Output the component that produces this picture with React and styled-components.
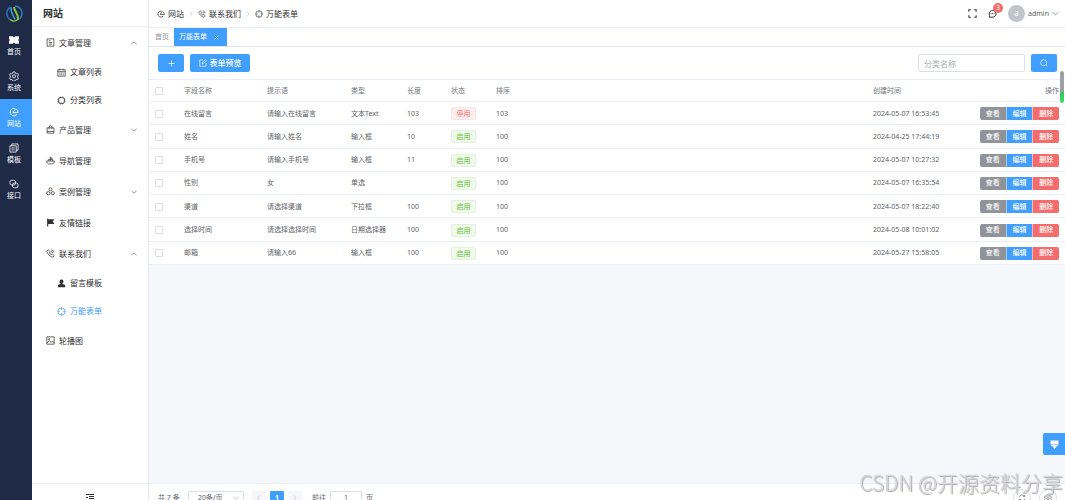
import React, { useState } from 'react';
import styled, { createGlobalStyle } from 'styled-components';

const icons = {
  ticket: <path d="M0 2h6l2 2 2-2h6v4.500l-1.500 1.500 1.500 1.500V14h-6l-2-2-2 2H0V9.500L1.500 8 0 6.500z" fill="currentColor" stroke="none" />,
  setting: (
    <>
      <path d="M6.500 1.500h3l.6 2 1.600.9 2-.5 1.500 2.600-1.400 1.500v1.900l1.400 1.500-1.500 2.600-2-.5-1.600.9-.6 2h-3l-.6-2-1.600-.9-2 .5L.8 11.400l1.400-1.500V8L.8 6.500l1.500-2.600 2 .5 1.600-.9z" />
      <circle cx="8" cy="8.500" r="2.500" />
    </>
  ),
  site: <path d="M12.500 12A6 6 0 1 1 9.500 2.500M6.500 9h8c0-2.500-1-5-3-5.500-1.500 0-3.500 2.500-5 5.500z" strokeWidth="1.500" />,
  copy: <path d="M4.500 4.500V1.500h10v10h-3M1.500 4.500h10v10h-10zM4 8h5M4 11h5" />,
  link: (
    <>
      <rect x="1.500" y="2" width="9" height="7.500" rx="3" />
      <rect x="5.500" y="6.500" width="9" height="7.500" rx="3" />
    </>
  ),
  doc: <path d="M2 1.500h12v13H2zM5 5h3M5 8h6M5 11h6" />,
  calendar: <path d="M1.500 3h13v11.500h-13zM1.500 6.500h13M5 1v3M11 1v3M4 9h2M7 9h2M10 9h2M4 12h2M7 12h2M10 12h2" />,
  chip: (
    <>
      <rect x="3" y="3" width="10" height="10" rx="2.500" strokeWidth="1.600" />
      <path d="M6 1v2M10 1v2M6 13v2M10 13v2M1 6h2M1 10h2M13 6h2M13 10h2" />
    </>
  ),
  bag: <path d="M2 5h12v9.500H2zM5.500 7.500V3.500a2.500 2.500 0 0 1 5 0v4M2 11.500h12" />,
  ship: <path d="M1 9h14c-.5 3-2 5-4 5H5c-2 0-3.500-2-4-5zM7.500 9V1.500M7.500 2l4 3h-4M4 9V6.500h8V9" />,
  share: (
    <>
      <circle cx="8" cy="4" r="2.700" />
      <circle cx="4" cy="11" r="2.900" />
      <circle cx="12" cy="11" r="2.900" />
    </>
  ),
  flag: <path d="M2 1h2v1h11l-3 4 3 4.500H4V15H2z" fill="currentColor" stroke="none" />,
  phone: (
    <>
      <path d="M1.500 4 4 1.500l3.500 3-1.500 2.500c.6 1.300 1.700 2.400 3 3l2.500-1.500 3 3.500-2.500 2.500C7.500 14 2 8.500 1.500 4z" />
      <path d="M9 4.500a3 3 0 0 1 2.500 2.500M9.500 1.500a6 6 0 0 1 5 5" />
    </>
  ),
  user: <path d="M8 1a3.600 3.600 0 0 1 2 6.600V9l4.500 1.500V14.500h-13V10.500L6 9V7.600A3.600 3.600 0 0 1 8 1z" fill="currentColor" stroke="none" />,
  aim: (
    <>
      <circle cx="8" cy="8" r="6.500" />
      <path d="M8 1.500v3.500M8 11v3.500M1.500 8H5M11 8h3.500" />
    </>
  ),
  picture: (
    <>
      <path d="M1.500 1.500h13v13h-13zM2 12.500l4-4 3 2.500 2.500-2 3 3" />
      <circle cx="5.500" cy="5.500" r="1" />
    </>
  ),
  up: <path d="m1 11 7-6 7 6" />,
  down: <path d="m1 5 7 6 7-6" />,
  left: <path d="m11 1-6 7 6 7" />,
  right: <path d="m5 1 6 7-6 7" />,
  close: <path d="m2 2 12 12M14 2 2 14" strokeWidth="1.800" />,
  plus: <path d="M8 1v14M1 8h14" strokeWidth="1.600" />,
  edit: <path d="M14 8v6.500H1.500V2H8M6 10l.5-2.500L13 1l2 2-6.500 6.500z" />,
  search: (
    <>
      <circle cx="7.500" cy="7.500" r="6" />
      <path d="m12 12 2.500 2.500" />
    </>
  ),
  full: <path d="M1.500 5V1.500H5M11 1.500h3.500V5M14.500 11v3.500H11M5 14.500H1.500V11" strokeWidth="1.800" />,
  message: (
    <>
      <path d="M2 14.500h6.500A6 6 0 1 0 3 11.500z" strokeWidth="1.700" />
      <path d="M4.500 8h1.500M7.300 8h1.500M10 8h1.500" strokeWidth="1.800" />
    </>
  ),
  brush: <path d="M1 1h14v7H1zM2 9h12v1.500l-4 1V14l-2 2-2-2v-2.500l-4-1z" fill="currentColor" stroke="none" />,
  fold: <path d="M0 1h16M6 5h10M6 9h10M0 13h16M0 7h4" strokeWidth="2" />,
  refresh: <path d="M2.500 7a5.700 5.700 0 0 1 10.500-2.500M13.500 1.500v3.500H10M13.500 9A5.700 5.700 0 0 1 3 11.500M2.500 14.500V11H6" />,
};

function Icon({ name, size = 9 }) {
  return (
    <Svg viewBox="0 0 16 16" $size={size} aria-hidden="true">
      {icons[name]}
    </Svg>
  );
}

const railItems = [
  { icon: 'ticket', label: '首页' },
  { icon: 'setting', label: '系统' },
  { icon: 'site', label: '网站' },
  { icon: 'copy', label: '模板' },
  { icon: 'link', label: '接口' },
];

const menuItems = [
  { icon: 'doc', label: '文章管理', arrow: 'up' },
  { icon: 'calendar', label: '文章列表', sub: true },
  { icon: 'chip', label: '分类列表', sub: true },
  { icon: 'bag', label: '产品管理', arrow: 'down' },
  { icon: 'ship', label: '导航管理' },
  { icon: 'share', label: '案例管理', arrow: 'down' },
  { icon: 'flag', label: '友情链接' },
  { icon: 'phone', label: '联系我们', arrow: 'up' },
  { icon: 'user', label: '留言模板', sub: true },
  { icon: 'aim', label: '万能表单', sub: true, active: true },
  { icon: 'picture', label: '轮播图' },
];

const crumbs = [
  { icon: 'site', label: '网站' },
  { icon: 'phone', label: '联系我们' },
  { icon: 'aim', label: '万能表单' },
];

const rows = [
  { name: '在线留言', hint: '请输入在线留言', type: '文本Text', length: '103', enabled: false, sort: '103', time: '2024-05-07 16:53:45' },
  { name: '姓名', hint: '请输入姓名', type: '输入框', length: '10', enabled: true, sort: '100', time: '2024-04-25 17:44:19' },
  { name: '手机号', hint: '请输入手机号', type: '输入框', length: '11', enabled: true, sort: '100', time: '2024-05-07 10:27:32' },
  { name: '性别', hint: '女', type: '单选', length: '', enabled: true, sort: '100', time: '2024-05-07 16:35:54' },
  { name: '渠道', hint: '请选择渠道', type: '下拉框', length: '100', enabled: true, sort: '100', time: '2024-05-07 18:22:40' },
  { name: '选择时间', hint: '请选择选择时间', type: '日期选择器', length: '100', enabled: true, sort: '100', time: '2024-05-08 10:01:02' },
  { name: '邮箱', hint: '请输入66', type: '输入框', length: '100', enabled: true, sort: '100', time: '2024-05-27 15:58:05' },
];

function App() {
  const [keyword, setKeyword] = useState('');
  const [page, setPage] = useState('1');
  const [checked, setChecked] = useState([]);

  const toggle = (name) => {
    setChecked(checked.includes(name) ? checked.filter((n) => n !== name) : [...checked, name]);
  };

  const toggleAll = () => {
    setChecked(checked.length === rows.length ? [] : rows.map((r) => r.name));
  };

  return (
    <Layout>
      <GlobalStyle />
      <Rail>
        <LogoBox>
          <svg width="17" height="17" viewBox="0 0 34 34" fill="none" aria-label="logo">
            <path d="M9 4A15 15 0 0 0 8 29" stroke="#2a6fb8" strokeWidth="3" />
            <path d="M18 2a15 15 0 0 1 9 26" stroke="#2f7fb0" strokeWidth="3" />
            <path d="M10 5c-1 9 3 13 8 24" stroke="#3a9ad0" strokeWidth="3" />
            <path d="M16 4c1 10 9 12 8 25" stroke="#8cc63f" strokeWidth="4" />
            <path d="M8 29c5 4 12 4 17-1" stroke="#8cc63f" strokeWidth="3" />
          </svg>
        </LogoBox>
        {railItems.map((item) => (
          <RailItem href="#" key={item.label} $active={item.label === '网站'}>
            <Icon name={item.icon} size={10} />
            {item.label}
          </RailItem>
        ))}
      </Rail>

      <Sidebar>
        <SideTitle>网站</SideTitle>
        <Menu>
          {menuItems.map((item) => (
            <MenuItem href="#" key={item.label} $sub={item.sub} $active={item.active}>
              <Icon name={item.icon} />
              <MenuText>{item.label}</MenuText>
              {item.arrow && <Icon name={item.arrow} size={6} />}
            </MenuItem>
          ))}
        </Menu>
        <FoldButton aria-label="收起菜单">
          <Icon name="fold" size={8} />
        </FoldButton>
      </Sidebar>

      <Main>
        <Header>
          <Breadcrumb>
            {crumbs.map((item, i) => (
              <React.Fragment key={item.label}>
                {i > 0 && <Separator><Icon name="right" size={6} /></Separator>}
                <Crumb href="#"><Icon name={item.icon} size={8} />{item.label}</Crumb>
              </React.Fragment>
            ))}
          </Breadcrumb>
          <HeaderRight>
            <PlainButton aria-label="全屏"><Icon name="full" size={9} /></PlainButton>
            <MessageButton aria-label="消息">
              <Icon name="message" size={9} />
              <Badge>3</Badge>
            </MessageButton>
            <UserButton>
              <Avatar>a</Avatar>
              admin
              <Icon name="down" size={7} />
            </UserButton>
          </HeaderRight>
        </Header>

        <Tabs>
          <Tab href="#">首页</Tab>
          <Tab href="#" $active>万能表单<Icon name="close" size={5} /></Tab>
        </Tabs>

        <Toolbar>
          <PrimaryButton $width="26px" aria-label="新增"><Icon name="plus" size={7} /></PrimaryButton>
          <PrimaryButton $width="60px"><Icon name="edit" size={8} />表单预览</PrimaryButton>
          <SearchInput
            aria-label="分类名称"
            placeholder="分类名称"
            value={keyword}
            onChange={(e) => setKeyword(e.target.value)}
          />
          <PrimaryButton $width="26px" aria-label="搜索"><Icon name="search" size={8} /></PrimaryButton>
        </Toolbar>

        <Content>
          <Table>
            <colgroup>
              <Col $width="29px" />
              <Col $width="83px" />
              <Col $width="84px" />
              <Col $width="56px" />
              <Col $width="44px" />
              <Col $width="45px" />
              <Col />
              <Col $width="107px" />
              <Col $width="91px" />
            </colgroup>
            <thead>
              <tr>
                <Th>
                  <Checkbox aria-label="全选" checked={checked.length === rows.length} onChange={toggleAll} />
                </Th>
                <Th>字段名称</Th>
                <Th>提示语</Th>
                <Th>类型</Th>
                <Th>长度</Th>
                <Th>状态</Th>
                <Th>排序</Th>
                <Th>创建时间</Th>
                <Th $right>操作</Th>
              </tr>
            </thead>
            <tbody>
              {rows.map((row) => (
                <tr key={row.name}>
                  <Td>
                    <Checkbox aria-label={row.name} checked={checked.includes(row.name)} onChange={() => toggle(row.name)} />
                  </Td>
                  <Td>{row.name}</Td>
                  <Td>{row.hint}</Td>
                  <Td>{row.type}</Td>
                  <Td>{row.length}</Td>
                  <Td><Tag $enabled={row.enabled}>{row.enabled ? '启用' : '停用'}</Tag></Td>
                  <Td>{row.sort}</Td>
                  <Td>{row.time}</Td>
                  <Td>
                    <ButtonGroup>
                      <RowButton $color="#909399">查看</RowButton>
                      <RowButton $color="#409eff">编辑</RowButton>
                      <RowButton $color="#f56c6c">删除</RowButton>
                    </ButtonGroup>
                  </Td>
                </tr>
              ))}
            </tbody>
          </Table>
        </Content>

        <Footer>
          <Total>共 7 条</Total>
          <SelectBox>
            <PageSize aria-label="每页条数" defaultValue="20">
              <option value="20">20条/页</option>
              <option value="50">50条/页</option>
            </PageSize>
            <Icon name="down" size={6} />
          </SelectBox>
          <Pager>
            <PageButton aria-label="上一页" disabled><Icon name="left" size={6} /></PageButton>
            <PageButton $active>1</PageButton>
            <PageButton aria-label="下一页" disabled><Icon name="right" size={6} /></PageButton>
          </Pager>
          <Jump>
            前往
            <JumpInput value={page} onChange={(e) => setPage(e.target.value)} />
            页
          </Jump>
          <FooterTools>
            <RoundButton aria-label="刷新"><Icon name="refresh" size={8} /></RoundButton>
            <RoundButton aria-label="设置"><Icon name="setting" size={8} /></RoundButton>
          </FooterTools>
        </Footer>
      </Main>

      <ScrollThumb />
      <ThemeButton aria-label="主题"><Icon name="brush" size={9} /></ThemeButton>
      <Watermark>CSDN @开源资料分享</Watermark>
    </Layout>
  );
}

const GlobalStyle = createGlobalStyle`
  * {
    box-sizing: border-box;
  }

  body {
    margin: 0;
    overflow: hidden;
    font-family: "Noto Sans", "Noto Sans CJK SC", sans-serif;
    font-size: 7px;
    line-height: 10px;
    color: #606266;
  }

  button, input, select {
    font: inherit;
    color: inherit;
    margin: 0;
  }

  button {
    padding: 0;
    border: 0;
    background: none;
    cursor: pointer;
  }

  a {
    color: inherit;
    text-decoration: none;
  }
`;

const Svg = styled.svg`
  flex: none;
  width: ${(props) => props.$size}px;
  height: ${(props) => props.$size}px;
  fill: none;
  stroke: currentColor;
  stroke-width: 1.3;
`;

/* the footer bar runs on below the fold */
const Layout = styled.div`
  display: flex;
  height: calc(100vh + 11px);
`;

const Rail = styled.nav`
  flex: none;
  width: 32px;
  background: #1f2a47;
`;

const LogoBox = styled.div`
  display: flex;
  align-items: center;
  justify-content: center;
  width: 29px;
  height: 27px;
`;

const RailItem = styled.a`
  display: flex;
  flex-direction: column;
  align-items: center;
  justify-content: center;
  gap: 2px;
  height: 36px;
  padding: 2px 4px 0 0;
  color: #fff;
  background: ${(props) => (props.$active ? '#409eff' : 'transparent')};
`;

const Sidebar = styled.aside`
  display: flex;
  flex-direction: column;
  flex: none;
  width: 117px;
  background: #fff;
  border-right: 1px solid #e6e8ee;
`;

const SideTitle = styled.h1`
  height: 27px;
  margin: 0;
  padding-left: 11px;
  border-bottom: 1px solid #ebeef5;
  font-size: 10px;
  line-height: 27px;
  font-weight: 700;
  color: #303133;
`;

const Menu = styled.nav`
  flex: 1;
`;

const MenuItem = styled.a`
  display: flex;
  align-items: center;
  gap: 4px;
  height: ${(props) => (props.$sub ? '28px' : '31px')};
  padding: 0 11px 0 ${(props) => (props.$sub ? '25px' : '14px')};
  font-size: 8px;
  color: ${(props) => (props.$active ? '#409eff' : '#303133')};
`;

const MenuText = styled.span`
  flex: 1;
`;

const FoldButton = styled.button`
  display: flex;
  align-items: center;
  justify-content: center;
  height: 28px;
  border-top: 1px solid #ebeef5;
  color: #303133;
`;

const Main = styled.main`
  display: flex;
  flex-direction: column;
  flex: 1;
  min-width: 0;
  background: #f5f7fa;
`;

const Header = styled.header`
  display: flex;
  align-items: center;
  justify-content: space-between;
  height: 27px;
  padding: 0 6px 0 8px;
  background: #fff;
`;

const Breadcrumb = styled.nav`
  display: flex;
  align-items: center;
  gap: 4px;
  font-size: 8px;
  color: #303133;
`;

const Crumb = styled.a`
  display: flex;
  align-items: center;
  gap: 3px;
`;

const Separator = styled.span`
  display: flex;
  color: #a8abb2;
`;

const HeaderRight = styled.div`
  display: flex;
  align-items: center;
  gap: 11px;
`;

const PlainButton = styled.button`
  display: flex;
  color: #303133;
`;

const MessageButton = styled(PlainButton)`
  position: relative;
`;

const Badge = styled.span`
  position: absolute;
  top: -6px;
  left: 5px;
  width: 10px;
  height: 10px;
  border-radius: 5px;
  background: #f56c6c;
  color: #fff;
  text-align: center;
`;

const UserButton = styled.button`
  display: flex;
  align-items: center;
  gap: 3px;
`;

const Avatar = styled.span`
  width: 17px;
  height: 17px;
  border-radius: 50%;
  background: #c0c4cc;
  color: #fff;
  font-size: 8px;
  line-height: 16px;
  text-align: center;
`;

const Tabs = styled.nav`
  display: flex;
  height: 20px;
  background: #fff;
  border-top: 1px solid #ebeef5;
  border-bottom: 1px solid #dfe3ea;
`;

const Tab = styled.a`
  display: flex;
  align-items: center;
  gap: 7px;
  padding: ${(props) => (props.$active ? '0 8px 0 5px' : '0 5px 0 6px')};
  background: ${(props) => (props.$active ? '#409eff' : 'transparent')};
  color: ${(props) => (props.$active ? '#fff' : '#909399')};
`;

const Toolbar = styled.div`
  display: flex;
  align-items: center;
  gap: 6px;
  height: 33px;
  padding: 0 8px 0 9px;
  background: #fff;
  border-bottom: 1px solid #ebeef5;
`;

const PrimaryButton = styled.button`
  display: flex;
  align-items: center;
  justify-content: center;
  gap: 3px;
  width: ${(props) => props.$width};
  height: 18px;
  border-radius: 2px;
  background: #409eff;
  color: #fff;
  font-size: 8px;
  font-weight: 500;
`;

const SearchInput = styled.input`
  width: 107px;
  height: 18px;
  margin-left: auto;
  padding: 0 5px;
  border: 1px solid #dcdfe6;
  border-radius: 2px;
  background: #fff;
  font-size: 8px;
  outline: none;

  &::placeholder {
    color: #a8abb2;
  }
`;

const Content = styled.div`
  flex: 1;
`;

const Table = styled.table`
  width: 100%;
  height: 185px;
  table-layout: fixed;
  border-collapse: separate;
  border-spacing: 0;
  background: #fff;
`;

const Col = styled.col`
  width: ${(props) => props.$width || 'auto'};
`;

const Th = styled.th`
  height: 22px;
  padding: 1px 6px 0;
  border-bottom: 1px solid #ebeef5;
  font-weight: 400;
  text-align: ${(props) => (props.$right ? 'right' : 'left')};
  color: #73767a;
`;

const Td = styled.td`
  padding: 1px 6px 0;
  border-bottom: 1px solid #ebeef5;
  white-space: nowrap;
`;

const Checkbox = styled.input.attrs({ type: 'checkbox' })`
  appearance: none;
  display: block;
  width: 8px;
  height: 8px;
  border: 1px solid #dcdfe6;
  border-radius: 1px;
  background: #fff;

  &:checked {
    border-color: #409eff;
    background: #409eff;
  }
`;

const Tag = styled.span`
  display: block;
  width: 25px;
  height: 13px;
  border: 1px solid ${(props) => (props.$enabled ? '#e1f3d8' : '#fde2e2')};
  border-radius: 2px;
  background: ${(props) => (props.$enabled ? '#f0f9eb' : '#fef0f0')};
  color: ${(props) => (props.$enabled ? '#67c23a' : '#f56c6c')};
  line-height: 11px;
  text-align: center;
`;

const ButtonGroup = styled.div`
  display: flex;
  border-radius: 2px;
  overflow: hidden;
`;

const RowButton = styled.button`
  flex: 1;
  height: 13px;
  background: ${(props) => props.$color};
  color: #fff;
  font-weight: 500;

  & + & {
    border-left: 1px solid rgba(255, 255, 255, 0.5);
  }
`;

const Footer = styled.footer`
  display: flex;
  align-items: center;
  height: 28px;
  padding: 0 8px 0 9px;
  background: #fff;
  border-top: 1px solid #ebeef5;
`;

const Total = styled.span`
  width: 30px;
`;

const SelectBox = styled.label`
  display: flex;
  align-items: center;
  width: 56px;
  height: 14px;
  padding-right: 4px;
  border: 1px solid #dcdfe6;
  border-radius: 2px;
  color: #909399;
`;

const PageSize = styled.select`
  appearance: none;
  flex: 1;
  min-width: 0;
  padding: 0 0 0 9px;
  border: 0;
  background: none;
  color: #606266;
  outline: none;
`;

const Pager = styled.div`
  display: flex;
  gap: 4px;
  margin-left: 8px;
`;

const PageButton = styled.button`
  display: flex;
  align-items: center;
  justify-content: center;
  width: 14px;
  height: 14px;
  border-radius: 1px;
  background: ${(props) => (props.$active ? '#409eff' : '#f5f7fa')};
  color: ${(props) => (props.$active ? '#fff' : '#a8abb2')};
  font-weight: 700;
`;

const Jump = styled.label`
  display: flex;
  align-items: center;
  gap: 4px;
  margin-left: 10px;
`;

const JumpInput = styled.input`
  width: 32px;
  height: 14px;
  padding: 0;
  border: 1px solid #dcdfe6;
  border-radius: 2px;
  text-align: center;
`;

const FooterTools = styled.div`
  display: flex;
  gap: 8px;
  margin-left: auto;
`;

const RoundButton = styled.button`
  display: flex;
  align-items: center;
  justify-content: center;
  width: 18px;
  height: 18px;
  border: 1px solid #dcdfe6;
  border-radius: 50%;
`;

const ScrollThumb = styled.div`
  position: absolute;
  top: 71px;
  right: 1px;
  width: 4px;
  height: 32px;
  border-radius: 2px;
  background: linear-gradient(#a0a0a0 62%, #2fc75a 68%, #43e070);
`;

const ThemeButton = styled.button`
  position: fixed;
  right: 0;
  bottom: 45px;
  display: flex;
  align-items: center;
  justify-content: center;
  width: 22px;
  height: 22px;
  border-radius: 2px 0 0 2px;
  background: #409eff;
  color: #fff;
`;

const Watermark = styled.div`
  position: fixed;
  right: 2px;
  bottom: 4px;
  font-family: "Noto Sans CJK SC", sans-serif;
  font-size: 21px;
  font-weight: 300;
  line-height: 28px;
  color: rgba(225, 225, 225, 0.8);
  text-shadow: 0 0 1px #aaa, 1px 1px 1px #aaa;
  white-space: nowrap;
  pointer-events: none;
`;

export default App;
